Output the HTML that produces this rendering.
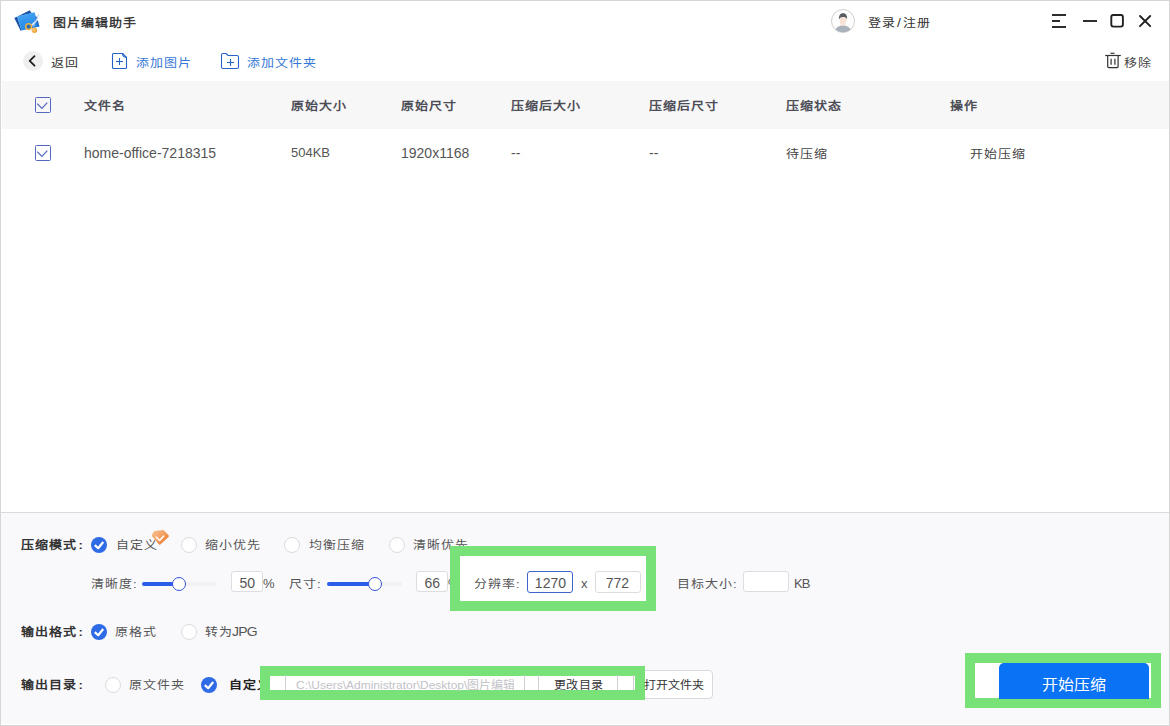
<!DOCTYPE html>
<html lang="zh-CN">
<head>
<meta charset="utf-8">
<style>
*{margin:0;padding:0;box-sizing:border-box}
html,body{width:1170px;height:726px;overflow:hidden;background:#fff}
body{position:relative;font-family:"Liberation Sans",sans-serif;font-size:14px;color:#333}
.a{position:absolute;white-space:nowrap;line-height:16px;font-size:13px;letter-spacing:1px}
.a{transform:scaleY(0.91);transform-origin:50% 7px}
.L{font-size:14px;letter-spacing:0;transform:none}
.frame{position:absolute;left:0;top:0;width:1170px;height:726px;border:1px solid #d6d6d6;pointer-events:none;z-index:50}
.hdr{position:absolute;left:2px;top:81px;width:1168px;height:48px;background:#f7f7f7}
.panel{position:absolute;left:1px;top:512px;width:1168px;height:212px;background:#f9f9fc;border-top:1px solid #d9d9e0}
.th{font-weight:bold;color:#4e4e58}
.td{color:#555}
.cb{position:absolute;width:16px;height:16px;border:1.3px solid #5468c0;border-radius:1.5px}
.cb svg{position:absolute;left:1px;top:1px}
.rad{position:absolute;width:16px;height:16px;border-radius:50%;border:1px solid #dcdce0;background:#fff}
.radon{position:absolute;width:16px;height:16px;border-radius:50%;background:#2e6be5}
.lbl{font-weight:bold;color:#333}
.opt{color:#555}
.inp{position:absolute;height:21px;border:1px solid #dcdce2;border-radius:3px;background:#fff;color:#555;text-align:right;line-height:19px;padding-top:2px;padding-right:7px}
.green{position:absolute;border:10px solid #78e279;background:#fff;z-index:20}
</style>
</head>
<body>
<div class="frame"></div>

<!-- Title bar -->
<svg style="position:absolute;left:10px;top:5px" width="40" height="35" viewBox="0 0 40 35">
  <defs><linearGradient id="lg1" x1="0" y1="0" x2="0.4" y2="1"><stop offset="0" stop-color="#48aaf6"/><stop offset="1" stop-color="#2585e6"/></linearGradient>
  <radialGradient id="ball" cx="0.4" cy="0.4" r="0.6"><stop offset="0" stop-color="#ffd27a"/><stop offset="1" stop-color="#ee9a30"/></radialGradient></defs>
  <polygon points="4.3,13 19.8,5.2 21.8,8.3 7.2,11.6 11.6,25.5 10.6,25.8" fill="#1d55a8"/>
  <polygon points="7.2,11.6 24.6,7.2 28.9,21.7 11.6,25.5" fill="url(#lg1)"/>
  <polygon points="25.2,12 27,11.5 29.5,21.5 27.5,22" fill="#1b5fb8" opacity="0.85"/>
  <line x1="31" y1="11" x2="21.5" y2="20.5" stroke="#f4f8ff" stroke-width="1.5"/>
  <line x1="28.5" y1="9.5" x2="23.5" y2="21.5" stroke="#b8c8e6" stroke-width="1"/>
  <circle cx="18.6" cy="21.6" r="2.9" fill="#2b4a70" fill-opacity="0.45" stroke="#e9b244" stroke-width="1.5"/>
  <circle cx="24.4" cy="25.3" r="2.7" fill="url(#ball)"/>
</svg>
<div class="a" style="left:53px;top:15px;color:#2b2b2b;-webkit-text-stroke:0.35px #2b2b2b">图片编辑助手</div>

<!-- avatar -->
<svg style="position:absolute;left:831px;top:9px" width="24" height="24" viewBox="0 0 24 24">
  <defs><clipPath id="avc"><circle cx="12" cy="12" r="11.3"/></clipPath></defs>
  <circle cx="12" cy="12" r="11.5" fill="#fdfdfd" stroke="#cfcfcf" stroke-width="1"/>
  <g clip-path="url(#avc)">
    <path d="M3.5,24 C4,18.5 7.5,16.5 12,16.5 C16.5,16.5 20,18.5 20.5,24 Z" fill="#a9b1bb"/>
    <ellipse cx="12" cy="12" rx="3.3" ry="4.6" fill="#f9e3d6"/>
    <path d="M8,10.5 C7.6,6.2 9.6,4.3 12,4.3 C14.6,4.3 16.4,6 16,10.5 C15.4,8.6 13.8,8 12,8 C10.2,8 8.7,8.8 8,10.5 Z" fill="#575b63"/>
  </g>
</svg>
<div class="a" style="left:868px;top:15px;color:#333">登录<span style="margin:0 1px;font-size:14px">/</span>注册</div>

<!-- window controls -->
<svg style="position:absolute;left:1050px;top:12px" width="104" height="18" viewBox="0 0 104 18">
  <g stroke="#222" stroke-width="1.9" fill="none">
    <line x1="2" y1="3" x2="16" y2="3"/>
    <line x1="2" y1="9" x2="10" y2="9"/>
    <line x1="2" y1="15" x2="16" y2="15"/>
    <line x1="33" y1="9" x2="47" y2="9"/>
    <rect x="61.3" y="3" width="11.6" height="11.6" rx="2"/>
    <line x1="90" y1="4" x2="100.2" y2="14.2" stroke-linecap="round"/>
    <line x1="100.2" y1="4" x2="90" y2="14.2" stroke-linecap="round"/>
  </g>
</svg>

<!-- toolbar -->
<div style="position:absolute;left:23px;top:51px;width:20px;height:20px;border-radius:50%;background:#efefef"></div>
<svg style="position:absolute;left:23px;top:51px" width="20" height="20" viewBox="0 0 20 20">
  <polyline points="11.5,5.2 6.7,9.9 11.5,14.7" fill="none" stroke="#1e1e1e" stroke-width="1.8" stroke-linecap="round" stroke-linejoin="round"/>
</svg>
<div class="a" style="left:51px;top:55px;color:#333">返回</div>

<svg style="position:absolute;left:111px;top:52px" width="17" height="18" viewBox="0 0 17 18">
  <g fill="none" stroke="#2563c9" stroke-width="1.1" stroke-linejoin="round">
    <path d="M1.5,2.5 Q1.5,1.5 2.5,1.5 H11.6 L15.5,5.4 V15.5 Q15.5,16.5 14.5,16.5 H2.5 Q1.5,16.5 1.5,15.5 Z"/>
    <path d="M11.6,1.5 Q11.6,5.4 15.5,5.4"/>
    <line x1="5" y1="9.5" x2="12" y2="9.5"/>
    <line x1="8.5" y1="6" x2="8.5" y2="13"/>
  </g>
</svg>
<div class="a" style="left:136px;top:55px;color:#3577d6">添加图片</div>

<svg style="position:absolute;left:220px;top:52px" width="20" height="18" viewBox="0 0 20 18">
  <g fill="none" stroke="#2563c9" stroke-width="1.1" stroke-linejoin="round">
    <path d="M1.5,3 Q1.5,1.5 3,1.5 H6 L8.2,3.5 H17 Q18.5,3.5 18.5,5 V15 Q18.5,16.5 17,16.5 H3 Q1.5,16.5 1.5,15 Z"/>
    <line x1="7" y1="10.5" x2="14" y2="10.5"/>
    <line x1="10.5" y1="7" x2="10.5" y2="14"/>
  </g>
</svg>
<div class="a" style="left:247px;top:55px;color:#3577d6">添加文件夹</div>

<svg style="position:absolute;left:1104px;top:52px" width="18" height="17" viewBox="0 0 18 17">
  <g stroke="#333" stroke-width="1.2" fill="none">
    <line x1="1.2" y1="3.5" x2="16.8" y2="3.5"/>
    <line x1="6.5" y1="1.3" x2="10.5" y2="1.3"/>
    <path d="M3.7,3.5 V14.6 Q3.7,15.6 4.7,15.6 H13.1 Q14.1,15.6 14.1,14.6 V3.5"/>
    <line x1="7.1" y1="6.7" x2="7.1" y2="12.8"/>
    <line x1="10.9" y1="6.7" x2="10.9" y2="12.8"/>
  </g>
</svg>
<div class="a" style="left:1124px;top:55px;color:#444">移除</div>

<!-- table header -->
<div class="hdr"></div>
<div class="cb" style="left:35px;top:97px"><svg width="13" height="13" viewBox="0 0 13 13"><polyline points="0.3,4.6 4.9,9.3 10.3,3.6" fill="none" stroke="#5468c0" stroke-width="1.2"/></svg></div>
<div class="a th" style="left:84px;top:98px">文件名</div>
<div class="a th" style="left:291px;top:98px">原始大小</div>
<div class="a th" style="left:401px;top:98px">原始尺寸</div>
<div class="a th" style="left:511px;top:98px">压缩后大小</div>
<div class="a th" style="left:649px;top:98px">压缩后尺寸</div>
<div class="a th" style="left:786px;top:98px">压缩状态</div>
<div class="a th" style="left:950px;top:98px">操作</div>

<!-- row -->
<div class="cb" style="left:35px;top:145px"><svg width="13" height="13" viewBox="0 0 13 13"><polyline points="0.3,4.6 4.9,9.3 10.3,3.6" fill="none" stroke="#5468c0" stroke-width="1.2"/></svg></div>
<div class="a td L" style="left:84px;top:145px">home-office-7218315</div>
<div class="a td L" style="left:291px;top:145px;font-size:13px">504KB</div>
<div class="a td L" style="left:401px;top:145px">1920x1168</div>
<div class="a td L" style="left:511px;top:145px">--</div>
<div class="a td L" style="left:649px;top:145px">--</div>
<div class="a td" style="left:786px;top:146px;color:#444">待压缩</div>
<div class="a td" style="left:970px;top:146px;color:#444">开始压缩</div>

<!-- bottom panel -->
<div class="panel"></div>

<!-- row 1: compression mode -->
<div class="a lbl" style="left:21px;top:537px">压缩模式<span style="margin-left:1.5px">:</span></div>
<div class="radon" style="left:91px;top:537px"><svg width="16" height="16" viewBox="0 0 16 16" style="position:absolute;left:0;top:0"><polyline points="3.8,8.1 7.2,11.2 12.2,5" fill="none" stroke="#fff" stroke-width="2.2" stroke-linejoin="round"/></svg></div>
<div class="a opt" style="left:116px;top:537px">自定义</div>
<svg style="position:absolute;left:150px;top:529px;z-index:5" width="20" height="17" viewBox="0 0 20 17">
  <defs><linearGradient id="gem" x1="0" y1="0" x2="1" y2="1"><stop offset="0" stop-color="#f8c090"/><stop offset="0.55" stop-color="#f19a5a"/><stop offset="1" stop-color="#e9712a"/></linearGradient></defs>
  <path d="M2.8,6.6 L4.6,3.2 L13.3,2.2 L17.8,7.1 L9.6,14.6 Z" fill="url(#gem)" stroke="url(#gem)" stroke-width="2.2" stroke-linejoin="round"/>
  <polyline points="6.3,8.2 9.6,11.4 13.6,7.2" fill="none" stroke="#fff5e8" stroke-width="1.8" stroke-linecap="round" stroke-linejoin="round"/>
</svg>
<div class="rad" style="left:181px;top:537px"></div>
<div class="a opt" style="left:205px;top:537px">缩小优先</div>
<div class="rad" style="left:284px;top:537px"></div>
<div class="a opt" style="left:309px;top:537px">均衡压缩</div>
<div class="rad" style="left:389px;top:537px"></div>
<div class="a opt" style="left:413px;top:537px">清晰优先</div>

<!-- row 2: sliders -->
<div class="a opt" style="left:91px;top:576px">清晰度:</div>
<div style="position:absolute;left:142px;top:582px;width:74px;height:4px;border-radius:2px;background:#f1f1f4"></div>
<div style="position:absolute;left:142px;top:582px;width:38px;height:4px;border-radius:2px;background:#2a5ee8"></div>
<div style="position:absolute;left:172px;top:577px;width:14px;height:14px;border-radius:50%;background:#fff;border:1.8px solid #3553dc"></div>
<div class="inp" style="left:231px;top:571px;width:32px">50</div>
<div class="a opt" style="left:263px;top:576px;font-size:13px;letter-spacing:-0.5px;transform:none">%</div>
<div class="a opt" style="left:289px;top:576px">尺寸:</div>
<div style="position:absolute;left:327px;top:582px;width:75px;height:4px;border-radius:2px;background:#f1f1f4"></div>
<div style="position:absolute;left:327px;top:582px;width:49px;height:4px;border-radius:2px;background:#2a5ee8"></div>
<div style="position:absolute;left:368px;top:577px;width:14px;height:14px;border-radius:50%;background:#fff;border:1.8px solid #3553dc"></div>
<div class="inp" style="left:416px;top:571px;width:32px">66</div>
<div class="a opt" style="left:448px;top:576px;font-size:13px;letter-spacing:-0.5px;transform:none">%</div>

<!-- green box 1 -->
<div class="green" style="left:450px;top:546px;width:206px;height:65px"></div>
<div class="a opt" style="left:474px;top:576px;z-index:21">分辨率:</div>
<div class="inp" style="left:527px;top:571px;width:46px;height:22px;border-color:#3f64cc;border-width:1.5px;z-index:21;padding-right:6px;padding-top:1.5px">1270</div>
<div class="a opt" style="left:581px;top:576px;z-index:21;transform:none">x</div>
<div class="inp" style="left:595px;top:571px;width:46px;height:22px;z-index:21;padding-right:11px">772</div>

<div class="a opt" style="left:677px;top:576px">目标大小:</div>
<div class="inp" style="left:743px;top:571px;width:46px"></div>
<div class="a opt" style="left:794px;top:576px;letter-spacing:-1px;transform:none">KB</div>

<!-- row 3: output format -->
<div class="a lbl" style="left:21px;top:624px">输出格式<span style="margin-left:1.5px">:</span></div>
<div class="radon" style="left:91px;top:624px"><svg width="16" height="16" viewBox="0 0 16 16" style="position:absolute;left:0;top:0"><polyline points="3.8,8.1 7.2,11.2 12.2,5" fill="none" stroke="#fff" stroke-width="2.2" stroke-linejoin="round"/></svg></div>
<div class="a opt" style="left:115px;top:624px">原格式</div>
<div class="rad" style="left:181px;top:624px"></div>
<div class="a opt" style="left:205px;top:624px">转为<span style="font-size:14px;letter-spacing:-0.8px;margin-left:-1px">JPG</span></div>

<!-- row 4: output dir -->
<div class="a lbl" style="left:21px;top:677px">输出目录<span style="margin-left:1.5px">:</span></div>
<div class="rad" style="left:105px;top:677px"></div>
<div class="a opt" style="left:129px;top:677px">原文件夹</div>
<div class="radon" style="left:201px;top:677px"><svg width="16" height="16" viewBox="0 0 16 16" style="position:absolute;left:0;top:0"><polyline points="3.8,8.1 7.2,11.2 12.2,5" fill="none" stroke="#fff" stroke-width="2.2" stroke-linejoin="round"/></svg></div>
<div class="a lbl" style="left:229px;top:677px;color:#222">自定义</div>

<div class="green" style="left:260px;top:666px;width:385px;height:34px"></div>
<div style="position:absolute;left:285px;top:670px;width:241px;height:28px;border:1px solid #d8d8de;background:#fff;z-index:19"></div>
<div style="position:absolute;left:285px;top:675px;width:1px;height:15px;background:#d0d0d6;z-index:21"></div>
<div class="a" style="left:296px;top:677px;width:218px;overflow:hidden;color:#c2c2c8;font-size:12px;letter-spacing:0;z-index:21">C:\Users\Administrator\Desktop\图片编辑助手</div>
<div style="position:absolute;left:524px;top:675px;width:1px;height:15px;background:#d0d0d6;z-index:21"></div>
<div style="position:absolute;left:538px;top:675px;width:1px;height:15px;background:#d0d0d6;z-index:21"></div>
<div class="a" style="left:554px;top:677px;color:#333;z-index:21;font-size:12px;letter-spacing:0.3px">更改目录</div>
<div style="position:absolute;left:617px;top:675px;width:1px;height:15px;background:#d0d0d6;z-index:21"></div>
<div style="position:absolute;left:633px;top:675px;width:1px;height:15px;background:#d0d0d6;z-index:21"></div>
<div style="position:absolute;left:630px;top:670px;width:83px;height:29px;border:1px solid #d8d8de;border-radius:4px;background:#fff"></div>
<div class="a" style="left:644px;top:677px;color:#333;font-size:12px;letter-spacing:0;z-index:22">打开文件夹</div>

<!-- green box 3 + button -->
<div class="green" style="left:965px;top:653px;width:196px;height:55px"></div>
<div style="position:absolute;left:999px;top:663px;width:150px;height:36px;background:#0a72f4;border-radius:5px 5px 0 0;z-index:21"></div>
<div class="a" style="left:1042px;top:677px;color:#fff;font-size:16px;letter-spacing:0;font-weight:500;line-height:18px;z-index:22">开始压缩</div>

</body>
</html>
